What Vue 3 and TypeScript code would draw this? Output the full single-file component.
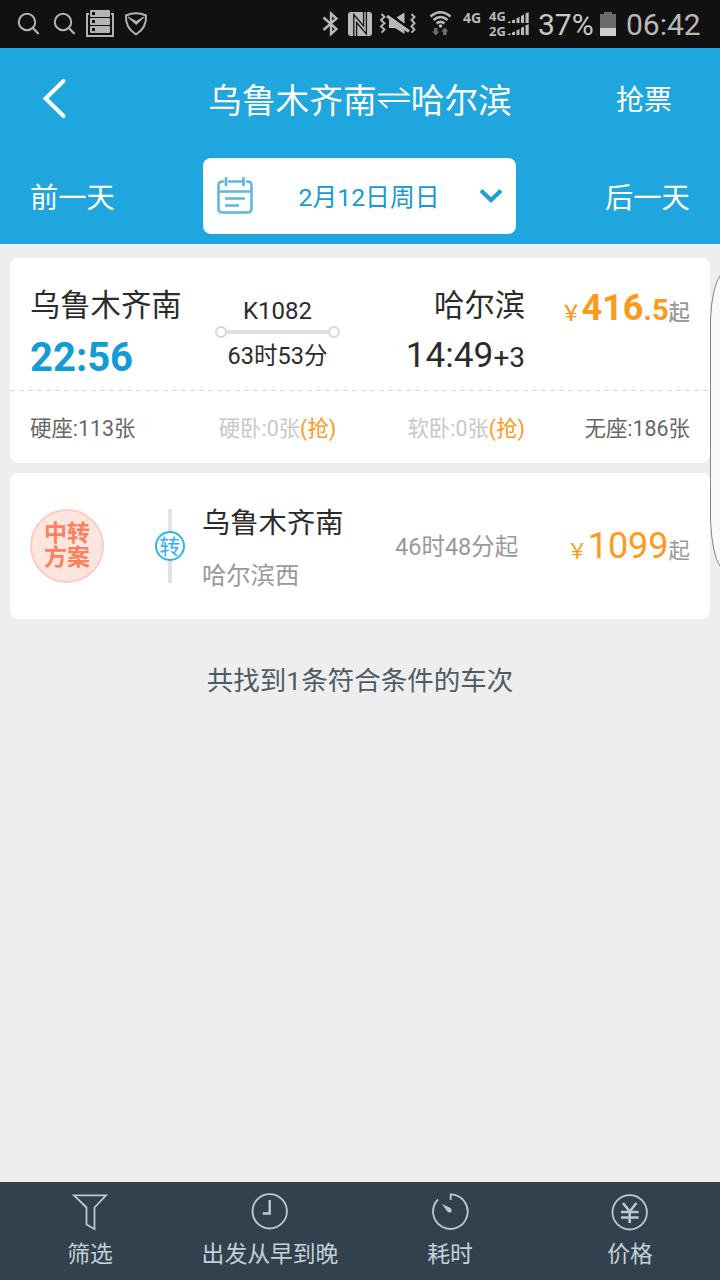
<script setup lang="ts">
interface Seat {
  label: string
  count: number
}

const seats: Seat[] = [
  { label: '硬座', count: 113 },
  { label: '硬卧', count: 0 },
  { label: '软卧', count: 0 },
  { label: '无座', count: 186 },
]

const tabs: { id: string; label: string }[] = [
  { id: 'filter', label: '筛选' },
  { id: 'depart', label: '出发从早到晚' },
  { id: 'duration', label: '耗时' },
  { id: 'price', label: '价格' },
]
</script>

<template>
  <div class="screen">
    <div class="status">
      <svg class="status-left" width="160" height="48" viewBox="0 0 160 48" fill="none" stroke="#b4b4b4" stroke-width="2">
        <circle cx="27" cy="22" r="8.2" />
        <path d="M32.8 28l5.2 5.3" stroke-width="2.3" stroke-linecap="round" />
        <circle cx="63" cy="22" r="8.2" />
        <path d="M68.8 28l5.2 5.3" stroke-width="2.3" stroke-linecap="round" />
        <path d="M89 14h-2v22h26V14h-2" />
        <g fill="#b4b4b4" stroke="none">
          <rect x="90" y="10" width="20" height="7" rx="1" />
          <rect x="90" y="18" width="20" height="7" rx="1" />
          <rect x="90" y="26" width="20" height="7" rx="1" />
        </g>
        <g fill="#111" stroke="none">
          <rect x="92" y="12" width="3" height="3" />
          <rect x="92" y="20" width="3" height="3" />
          <rect x="92" y="28" width="3" height="3" />
        </g>
        <path d="M126 15.500q10-4.500 20 0q1 12-10 19q-11-7-10-19z" stroke-linejoin="round" />
        <path d="M128 17l8.200 7.500l8-7.500l-8 4.500z" fill="#b4b4b4" stroke-width="1" />
      </svg>
      <svg class="status-icons" width="136" height="48" viewBox="320 0 136 48" fill="none" stroke="#b9b9b9" stroke-width="2">
        <path d="M323.500 17.500l13 11.500l-5.500 5V13.500l5.500 5l-13 11.500" stroke-width="2.400" />
        <rect x="348" y="12" width="24" height="24" rx="3" fill="#b9b9b9" stroke="none" />
        <path d="M353.800 36V14.500L363.600 26V12M366.400 12V34L356.600 22.500V36" stroke="#111" stroke-width="1.300" />
        <path d="M381.500 14l3 3l-3.500 3l3.500 3.200l-3.500 3.200l3.500 3.200l-3 3M411.500 14l3 3l-3 3l3 3.200l-3 3.200l3 3.200l-3 3" stroke-width="1.900" />
        <path d="M389 18.500v9.500h6l9.500 6v-4zM396.500 17.500l8-5v11.500z" fill="#b9b9b9" stroke="none" />
        <path d="M388.500 13.500l22 15.500" stroke="#111" stroke-width="1.800" />
        <path d="M387 16l22 15.500" stroke-width="3" />
        <path d="M430.500 16.500q10-8.500 20 0M433.500 20q7-6 14 0M436.500 23.500q4-3.300 8 0" stroke-width="2.500" />
        <circle cx="440.500" cy="26" r="1.800" fill="#b9b9b9" stroke="none" />
        <path d="M434 28h3.500v3.500h2l-3.700 4l-3.800-4h2zM443 35h3.500v-3.500h2l-3.700-4l-3.800 4h2z" fill="#6e6e6e" stroke="none" />
      </svg>
      <span class="net">4G</span>
      <span class="dual"><span>4G</span><span>2G</span></span>
      <svg class="signal" width="22" height="48" viewBox="508 0 22 48" fill="#b9b9b9">
        <path d="M508 22l2.500-.7V23H508zM512 20.500l3-1V23h-3zM516.500 18.500l3-1.500v6h-3zM521 16l3-1.500V23h-3zM525.500 13.500l3.200-1.500v11h-3.200z" />
        <path d="M508 34l2.500-.7V35H508zM512 32.500l3-1V35h-3zM516.500 30.500l3-1.500v6h-3zM521 28l3-1.500V35h-3zM525.500 25.500l3.200-1.500v11h-3.200z" />
      </svg>
      <span class="percent">37%</span>
      <svg class="battery" width="16" height="48" viewBox="0 0 16 48">
        <path d="M4 12h8v2h4v22H0V14h4z" fill="#6b6b6b" />
        <path d="M0 28h16v8H0z" fill="#cdcdcd" />
      </svg>
      <span class="clock">06:42</span>
    </div>

    <header class="header">
      <div class="title-row">
        <svg class="back" width="26" height="42" viewBox="0 0 26 42" fill="none" stroke="#fff" stroke-width="4">
          <path d="M22.500 4L4.500 21.500L22.500 39" stroke-linecap="round" stroke-linejoin="miter" />
        </svg>
        <h1 class="title">
          <span>乌鲁木齐南</span>
          <svg width="34" height="26" viewBox="0 0 34 26" fill="none" stroke="#fff" stroke-width="2">
            <path d="M1 9.500H31L23 3M33 16H3L10.500 23" />
          </svg>
          <span>哈尔滨</span>
        </h1>
        <span class="grab">抢票</span>
      </div>
      <div class="day-row">
        <span class="day">前一天</span>
        <div class="date">
          <svg width="36" height="38" viewBox="0 0 36 38" fill="none" stroke="#5bb8de" stroke-width="2.500" stroke-linecap="round">
            <path d="M6 4.500h-.5q-4 0-4 4v23q0 4 4 4h25q4 0 4-4v-23q0-4-4-4H30M12 4.500h12.500M1.500 14.500h33" />
            <path d="M9 1.500v6.500M26.500 1.500v6.500" stroke-width="2.800" />
            <path d="M9 21.500h18M9 28.500h12" />
          </svg>
          <span class="date-text">2月12日周日</span>
          <svg width="24" height="16" viewBox="0 0 24 16" fill="none" stroke="#239fd2" stroke-width="4.200">
            <path d="M2 2.500L12 12L22 2.500" />
          </svg>
        </div>
        <span class="day">后一天</span>
      </div>
    </header>

    <main class="content">
      <section class="card train">
        <div class="columns journey">
          <div class="from">
            <div class="station">乌鲁木齐南</div>
            <div class="depart">22:56</div>
          </div>
          <div class="middle">
            <div class="number">K1082</div>
            <div class="track"><i></i><b></b><i></i></div>
            <div class="length">63时53分</div>
          </div>
          <div class="to">
            <div class="station">哈尔滨</div>
            <div class="arrive">14:49<small>+3</small></div>
          </div>
          <div class="price strong"><span class="yen">￥</span>416<span class="cents">.5</span><span class="from-mark">起</span></div>
        </div>
        <div class="columns seats">
          <span v-for="seat in seats" :key="seat.label" :class="{ empty: seat.count === 0 }">{{ seat.label }}:{{ seat.count }}张<em v-if="seat.count === 0">(抢)</em></span>
        </div>
      </section>

      <section class="card transfer">
        <div class="badge"><span>中转</span><span>方案</span></div>
        <div class="line"><span>转</span></div>
        <div class="stops">
          <div class="stop-from">乌鲁木齐南</div>
          <div class="stop-to">哈尔滨西</div>
        </div>
        <div class="total">46时48分起</div>
        <div class="price"><span class="yen">￥</span>1099<span class="from-mark">起</span></div>
      </section>

      <p class="summary">共找到1条符合条件的车次</p>
    </main>

    <nav class="tabs">
      <div v-for="tab in tabs" :key="tab.id" class="tab">
        <svg width="38" height="40" viewBox="0 0 38 40" fill="none" stroke="#bdc8d1" stroke-width="1.800">
          <path v-if="tab.id === 'filter'" d="M3 3.300H35L23.500 15.500V37L15.500 32.500V15.500z" />
          <template v-else-if="tab.id === 'depart'">
            <circle cx="18.700" cy="19.300" r="17.200" />
            <path d="M18.700 8v13.500h-7" stroke-width="2.400" />
          </template>
          <template v-else-if="tab.id === 'duration'">
            <path d="M19.700 8V2.300A17.300 17.300 0 1 1 7 7.500" />
            <path d="M11 12l8.500 4q2 2 .8 4q-2 1.500-4.200-.8z" fill="#bdc8d1" stroke="none" />
          </template>
          <template v-else>
            <circle cx="18.700" cy="20.300" r="17.200" />
            <path d="M12 11l6.700 8.500l6.700-8.500M18.700 19v12M10 20h17.500M10 25.500h17.500" stroke-width="2.600" />
          </template>
        </svg>
        <span>{{ tab.label }}</span>
      </div>
    </nav>

    <svg class="edge-handle" width="12" height="296" viewBox="0 0 12 296">
      <path d="M12.500 2Q4 14 2.500 46V247Q4 282 12.500 294" fill="#fafafa" stroke="#858585" stroke-width="1" />
    </svg>
  </div>
</template>

<style>
body {
  margin: 0;
}
</style>

<style scoped>
.screen {
  position: relative;
  display: flex;
  flex-direction: column;
  width: 720px;
  height: 1280px;
  overflow: hidden;
  background: #eee;
  font-family: Roboto, "Noto Sans CJK SC", sans-serif;
  color: #2b2b2b;
  white-space: nowrap;
}

svg {
  display: block;
  flex: none;
}

/* status bar */
.status {
  display: flex;
  height: 48px;
  background: #111;
  color: #b9b9b9;
  line-height: 50px;
}

.status > * {
  flex: none;
}

.status-icons {
  margin-left: 160px;
}

.net {
  width: 20px;
  margin-left: 7px;
  font: bold 14px/35px "Open Sans", sans-serif;
}

.dual {
  display: flex;
  flex-direction: column;
  width: 19px;
  margin-left: 6px;
  padding-top: 9px;
  font: bold 13px/15px "Open Sans", sans-serif;
}

.percent {
  width: 62px;
  margin-left: 8px;
  font-size: 30px;
  color: #c8c8c8;
}

.clock {
  margin-left: 10px;
  font-size: 30px;
}

/* header */
.header {
  height: 196px;
  background: #20a6de;
  color: #fff;
}

.title-row {
  display: grid;
  grid-template-columns: 150px 1fr 150px;
  align-items: center;
  height: 104px;
  padding: 0 48px 0 41px;
}

.back {
  margin-top: -4px;
}

.title {
  display: flex;
  justify-content: center;
  align-items: center;
  margin: 3px 0 0 7px;
  font-size: 33.700px;
  font-weight: 400;
  line-height: 50px;
}

.title svg {
  margin-top: -7px;
}

.grab {
  margin-top: -4px;
  text-align: right;
  font-size: 28px;
}

.day-row {
  display: flex;
  justify-content: space-between;
  align-items: center;
  padding: 6px 30px 0;
  font-size: 28.300px;
}

.day {
  width: 86px;
  margin-top: -1px;
}

.day:last-child {
  margin-left: 2px;
  margin-right: -1px;
}

.date {
  display: flex;
  align-items: center;
  justify-content: space-between;
  box-sizing: border-box;
  width: 313px;
  height: 76px;
  padding: 0 13px 0 14px;
  border-radius: 8px;
  background: #fff;
}

.date-text {
  margin: -3px 0 0 6px;
  font-size: 24.800px;
  color: #159bd2;
}

/* results */
.content {
  flex: 1;
  padding: 14px 10px 0;
}

.card {
  border-radius: 8px;
  background: #fff;
}

.columns {
  display: grid;
  grid-template-columns: 185px 125px 185px 165px;
  padding: 0 20px;
}

.journey {
  height: 132px;
}

.from,
.to {
  padding-top: 22px;
}

.to {
  text-align: right;
}

.station {
  font-size: 30.300px;
  line-height: 51px;
}

.depart {
  font-size: 40px;
  font-weight: 700;
  line-height: 54px;
  color: #129cd5;
}

.arrive {
  font-size: 35.200px;
  line-height: 48px;
}

.arrive small {
  font-size: 28px;
  line-height: 1;
}

.middle {
  padding-top: 41px;
  text-align: center;
  font-size: 24px;
}

.number {
  line-height: 24px;
}

.length {
  font-size: 23.500px;
  line-height: 32px;
}

.track {
  display: flex;
  align-items: center;
  height: 17px;
}

.track i {
  box-sizing: border-box;
  width: 12px;
  height: 12px;
  border: 2px solid #d8d8d8;
  border-radius: 50%;
}

.track b {
  flex: 1;
  height: 4px;
  background: #e1e1e1;
}

.price {
  text-align: right;
  font-size: 36px;
  line-height: 48px;
  color: #fd9a1d;
}

.price span {
  line-height: 1;
}

.price.strong {
  padding-top: 26px;
  font-weight: 700;
}

.yen {
  font-size: 21px;
}

.strong .yen,
.strong .from-mark {
  font-weight: 500;
}

.cents {
  font-size: 29px;
}

.from-mark {
  font-size: 21.400px;
  color: #999;
}

.seats {
  align-items: center;
  height: 73px;
  box-sizing: border-box;
  font-size: 21.400px;
  color: #666;
  background: repeating-linear-gradient(90deg, #d6d6d6 0 5px, transparent 5px 9px) 0 0 / 100% 1px no-repeat;
}

.seats span:nth-child(2) {
  justify-self: center;
}

.seats span:nth-child(n + 3) {
  justify-self: end;
}

.seats .empty {
  color: #c8c8c8;
}

.seats em {
  font-style: normal;
  color: #fd9a1d;
}

.transfer {
  display: grid;
  grid-template-columns: 125px 47px 193px 1fr auto;
  align-items: center;
  height: 146px;
  margin-top: 10px;
  padding: 0 20px;
  box-sizing: border-box;
}

.badge {
  display: flex;
  flex-direction: column;
  justify-content: center;
  align-items: center;
  box-sizing: border-box;
  width: 74px;
  height: 74px;
  border: 2px solid #fdcdc1;
  border-radius: 50%;
  background: #fee6df;
  color: #fe7f5b;
  font-size: 23px;
  font-weight: 700;
  line-height: 24px;
}

.line {
  display: flex;
  align-items: center;
  justify-content: center;
  width: 30px;
  height: 74px;
  background: linear-gradient(#e3e3e3, #e3e3e3) center / 4px 100% no-repeat;
}

.line span {
  box-sizing: border-box;
  width: 30px;
  height: 30px;
  border: 2px solid #2bb4ef;
  border-radius: 50%;
  background: #fff;
  color: #2bb4ef;
  font-size: 21px;
  line-height: 28px;
  text-align: center;
  text-indent: -.5px;
  flex: none;
}

.stops {
  padding-top: 5px;
}

.stop-from {
  font-size: 28.300px;
  line-height: 55px;
}

.stop-to {
  font-size: 24.300px;
  line-height: 50px;
  color: #999;
}

.total {
  margin-top: -3px;
  font-size: 23.500px;
  color: #999;
}

.summary {
  margin: 45px 0 0;
  text-align: center;
  font-size: 26.500px;
  line-height: 33px;
  color: #4e5a64;
}

/* bottom bar */
.tabs {
  display: grid;
  grid-template-columns: repeat(4, 1fr);
  height: 98px;
  background: #32414d;
  color: #c5cfd7;
}

.tab {
  display: flex;
  flex-direction: column;
  align-items: center;
  padding-top: 10px;
  font-size: 22.800px;
  line-height: 46px;
}

.edge-handle {
  position: absolute;
  top: 273px;
  right: 0;
}
</style>
